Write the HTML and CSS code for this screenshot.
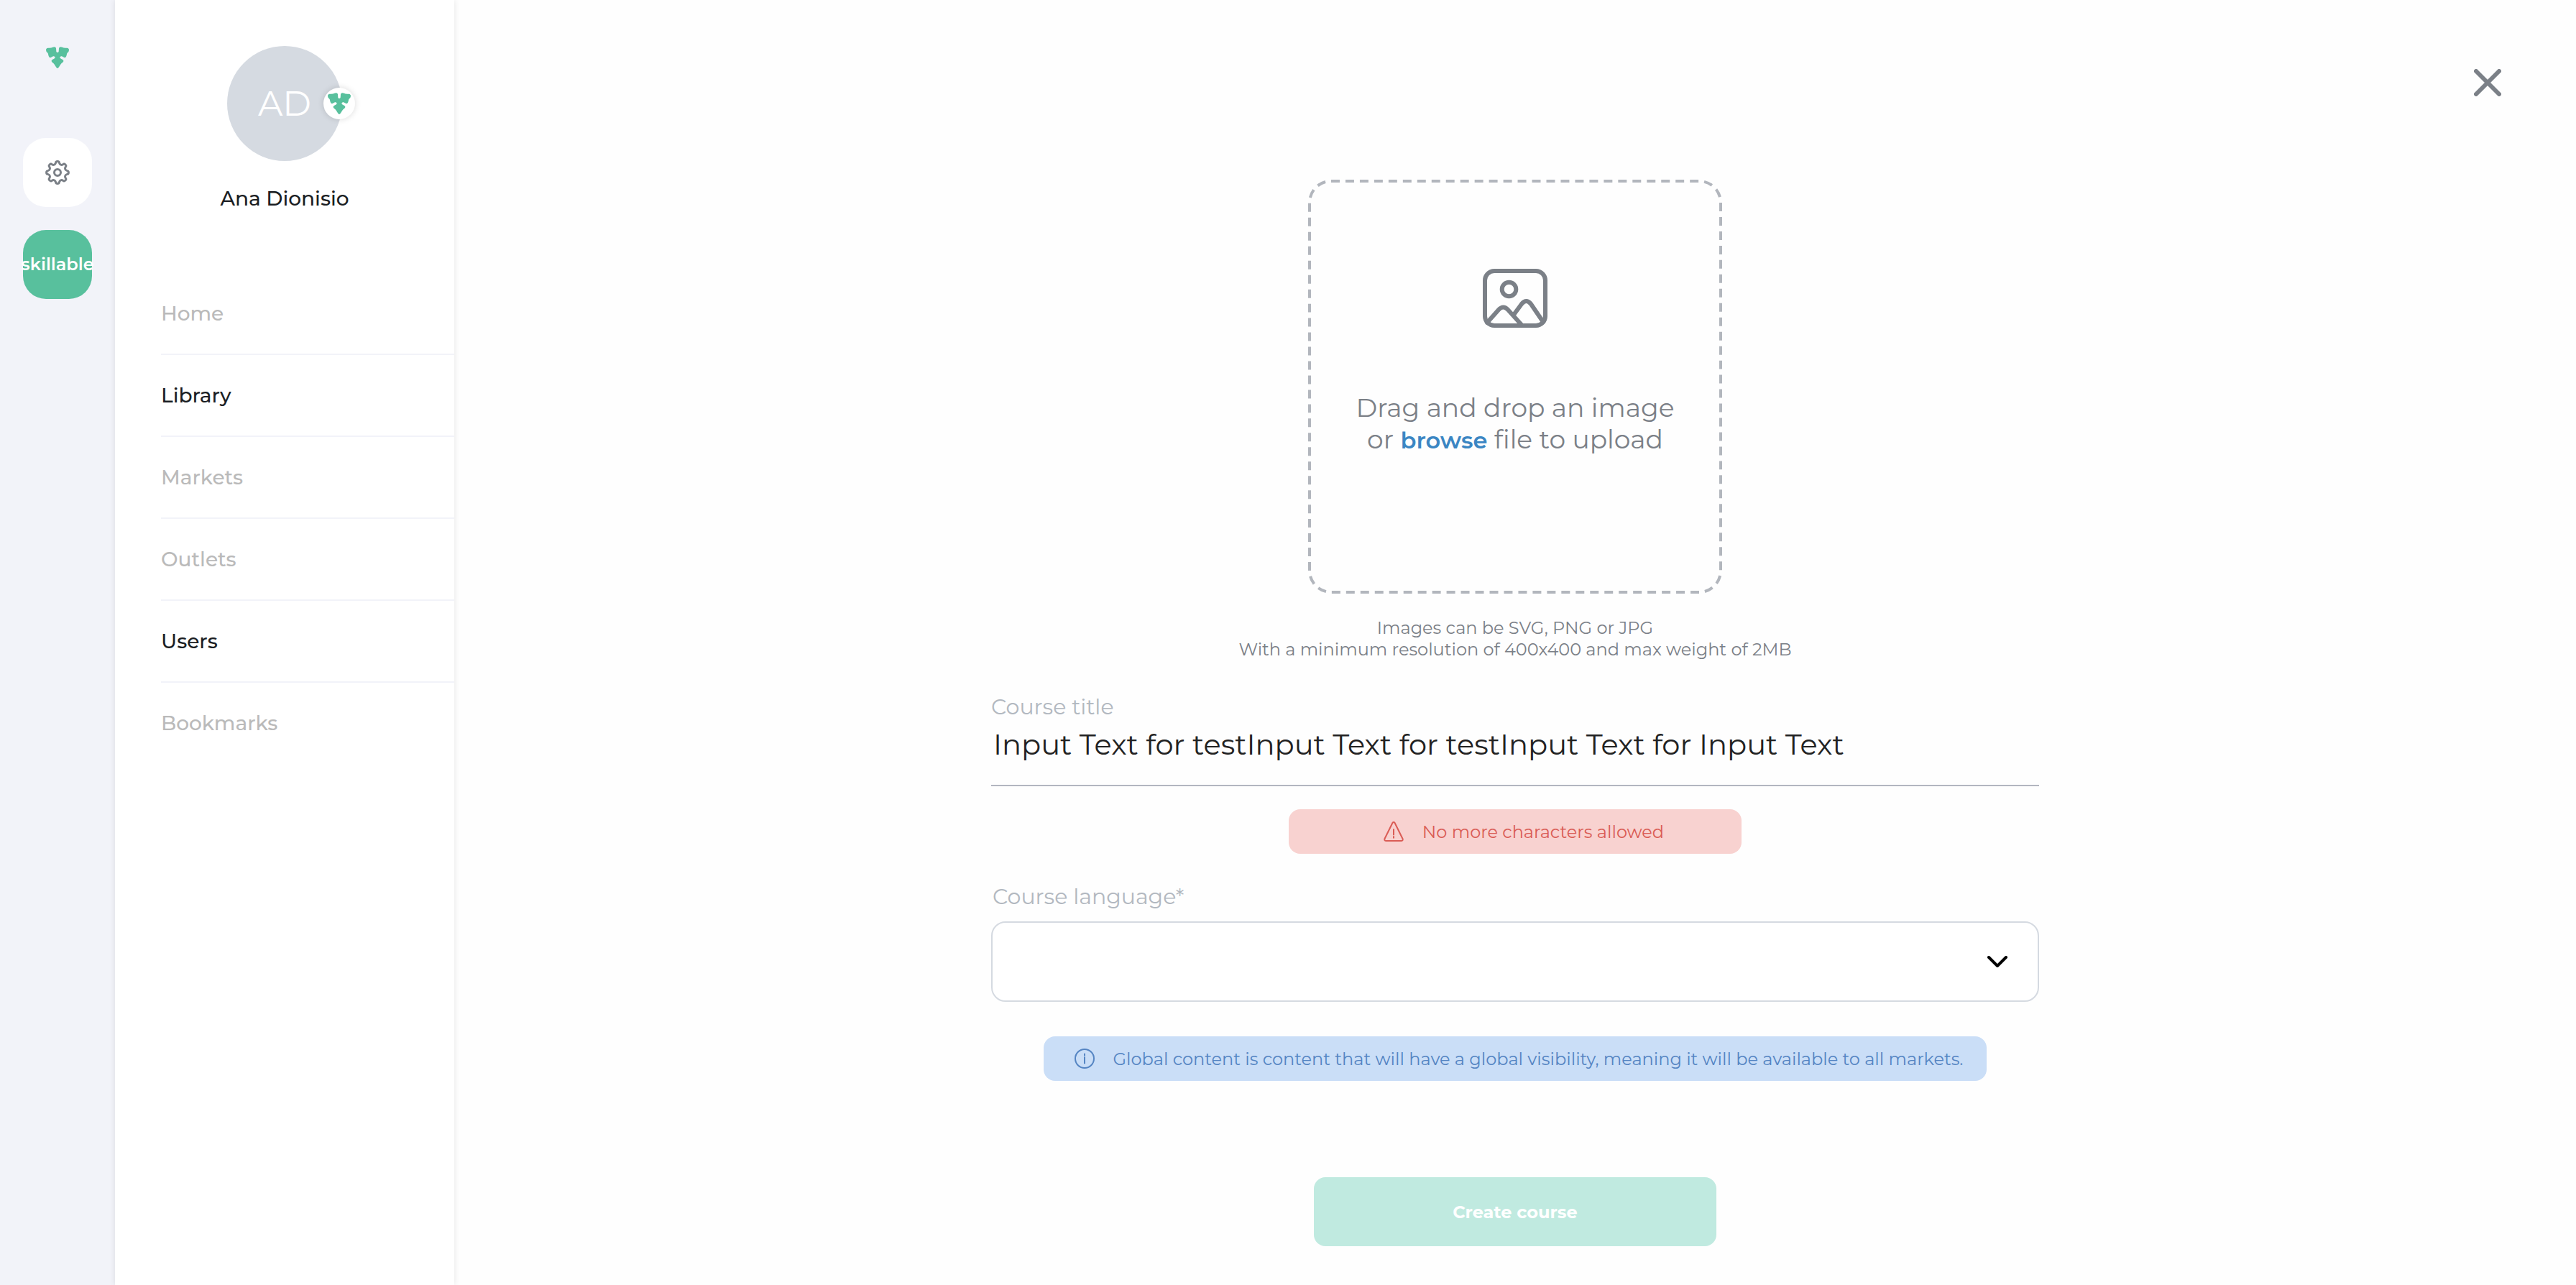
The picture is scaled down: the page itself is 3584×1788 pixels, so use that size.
FILE: index.html
```html
<!DOCTYPE html>
<html lang="en">
<head>
  <meta charset="utf-8">
  <meta name="viewport" content="width=device-width, initial-scale=1">
  <title>Create course</title>
  <link rel="stylesheet" href="styles.css">
</head>
<body class="app">
  <svg class="sprite" aria-hidden="true">
    <symbol id="logo" viewBox="0 0 96 90">
      <path d="M49 24H48Q44 24 43 20L42 7Q41-2 28 2Q22 6 8 5Q0 6 0 14Q0 22 8 27L11 39Q13 47 20 45L30 40Q36 38 38 44Q38 48 32 51Q22 55 23 61Q25 66 31 69Q34 71 40 82Q44 90 48 90H49Z"/>
      <path transform="translate(96 0) scale(-1 1)" d="M49 24H48Q44 24 43 20L42 7Q41-2 28 2Q22 6 8 5Q0 6 0 14Q0 22 8 27L11 39Q13 47 20 45L30 40Q36 38 38 44Q38 48 32 51Q22 55 23 61Q25 66 31 69Q34 71 40 82Q44 90 48 90H49Z"/>
    </symbol>
  </svg>

  <aside class="rail">
    <a class="rail-logo" href="#" aria-label="Start"><svg class="logo"><use href="#logo"/></svg></a>
    <button class="tile tile-settings" type="button" aria-label="Settings">
      <svg class="gear" viewBox="-18 -18 36 36">
        <path d="M13.04-2.59A2.6 2.6 0 0 1 13.04 2.59A3.2 3.2 0 0 0 11.06 7.39A2.6 2.6 0 0 1 7.39 11.06A3.2 3.2 0 0 0 2.59 13.04A2.6 2.6 0 0 1-2.59 13.04A3.2 3.2 0 0 0-7.39 11.06A2.6 2.6 0 0 1-11.06 7.39A3.2 3.2 0 0 0-13.04 2.59A2.6 2.6 0 0 1-13.04-2.59A3.2 3.2 0 0 0-11.06-7.39A2.6 2.6 0 0 1-7.39-11.06A3.2 3.2 0 0 0-2.59-13.04A2.6 2.6 0 0 1 2.59-13.04A3.2 3.2 0 0 0 7.39-11.06A2.6 2.6 0 0 1 11.06-7.39A3.2 3.2 0 0 0 13.04-2.59Z"/>
        <circle r="4.5"/>
      </svg>
    </button>
    <button class="tile tile-team" type="button">skillable</button>
  </aside>

  <aside class="sidebar">
    <div class="avatar">AD
      <span class="avatar-badge"><svg class="logo"><use href="#logo"/></svg></span>
    </div>
    <p class="user-name">Ana Dionisio</p>
    <nav class="nav">
      <a class="nav-link" href="#">Home</a>
      <a class="nav-link nav-link-strong" href="#">Library</a>
      <a class="nav-link" href="#">Markets</a>
      <a class="nav-link" href="#">Outlets</a>
      <a class="nav-link nav-link-strong" href="#">Users</a>
      <a class="nav-link" href="#">Bookmarks</a>
    </nav>
  </aside>

  <main class="main">
    <header class="main-header">
      <button class="close" type="button" aria-label="Close">
        <svg class="close-icon" viewBox="0 0 38 38"><path d="M3 3L35 35M35 3L3 35"/></svg>
      </button>
    </header>

    <form class="form">
      <div class="dropzone">
        <svg class="dropzone-outline" aria-hidden="true"><rect pathLength="2240"/></svg>
        <svg class="image-icon" viewBox="0 0 90 82">
          <rect x="3" y="3" width="84" height="76" rx="13"/>
          <circle cx="36.5" cy="28.5" r="9.8"/>
          <path d="M6 75L22 57Q28.5 50 35 57L54 78M43 64L54 49Q60.5 41 67 49L84 74"/>
        </svg>
        <p class="dropzone-text">Drag and drop an image<br>or <a class="browse" href="#">browse</a> file to upload</p>
      </div>
      <p class="hint">Images can be SVG, PNG or JPG<br>With a minimum resolution of 400x400 and max weight of 2MB</p>

      <label class="label" for="course-title">Course title</label>
      <input class="text-input" id="course-title" type="text" value="Input Text for testInput Text for testInput Text for Input Text">

      <div class="notice notice-error" role="alert">
        <svg class="notice-icon" viewBox="0 0 28 28">
          <path d="M12.3 2.2Q14 0 15.7 2.2L26.6 24.3Q27.2 26.8 24.8 27H3.2Q.8 26.8 1.4 24.3Z"/>
          <path d="M14 11V18.5M14 21V22.8"/>
        </svg>
        <span>No more characters allowed</span>
      </div>

      <label class="label label-language" for="course-language">Course language*</label>
      <div class="select">
        <select class="select-input" id="course-language"><option></option></select>
        <svg class="chevron" viewBox="0 0 28 16"><path d="M2 2L14 14L26 2"/></svg>
      </div>

      <div class="notice notice-info">
        <svg class="notice-icon" viewBox="0 0 28 28">
          <circle cx="14" cy="14" r="13"/>
          <path d="M14 12V20.5M14 7.5V9.5"/>
        </svg>
        <span>Global content is content that will have a global visibility, meaning it will be available to all markets.</span>
      </div>

      <button class="submit" type="submit" disabled>Create course</button>
    </form>
  </main>
</body>
</html>
```
FILE: styles.css
```css
* {
  box-sizing: border-box;
}

.app {
  display: flex;
  min-height: 100vh;
  margin: 0;
  background: #fefefe;
  color: #1b1e23;
  font-family: Montserrat, "Open Sans", sans-serif;
  font-size: 24px;
}

.sprite {
  position: absolute;
  width: 0;
  height: 0;
}

button,
input,
select {
  margin: 0;
  border: 0;
  font-family: inherit;
}

svg {
  display: block;
  flex: none;
  fill: none;
  stroke-linecap: round;
  stroke-linejoin: round;
}

.logo {
  width: 32px;
  height: 32px;
  fill: #58c09d;
}

/* Workspace rail */
.rail {
  display: flex;
  flex: none;
  flex-direction: column;
  align-items: center;
  gap: 32px;
  width: 160px;
  padding-top: 64px;
  background: #f2f3f9;
}

.rail-logo {
  height: 96px;
}

.tile {
  display: flex;
  align-items: center;
  justify-content: center;
  width: 96px;
  height: 96px;
  padding: 0;
  border-radius: 32px;
}

.tile-settings {
  background: #fff;
}

.tile-team {
  background: #58c09d;
  color: #fff;
  font-size: 24px;
  font-weight: 600;
  line-height: 28px;
}

.gear {
  width: 36px;
  height: 36px;
  stroke: #7b8087;
  stroke-width: 3;
}

/* Sidebar */
.sidebar {
  position: relative;
  z-index: 1;
  display: flex;
  flex: none;
  flex-direction: column;
  align-items: center;
  width: 472px;
  padding-top: 64px;
  background: #fff;
  box-shadow: 0 0 8px rgba(0, 0, 0, 0.1);
}

.avatar {
  position: relative;
  display: flex;
  align-items: center;
  justify-content: center;
  width: 160px;
  height: 160px;
  border-radius: 50%;
  background: #d5dae1;
  color: #fff;
  font-size: 48px;
  line-height: 56px;
}

.avatar-badge {
  position: absolute;
  top: 58px;
  right: -18px;
  display: flex;
  align-items: center;
  justify-content: center;
  width: 44px;
  height: 44px;
  border-radius: 50%;
  background: #fff;
  box-shadow: 0 0 8px rgba(0, 0, 0, 0.15);
}

.user-name {
  margin: 34px 0 86px;
  font-size: 28px;
  font-weight: 500;
  line-height: 36px;
}

.nav {
  align-self: stretch;
  padding-left: 64px;
}

.nav-link {
  display: flex;
  align-items: center;
  height: 114px;
  border-bottom: 2px solid #f2f3f9;
  color: #bababa;
  font-size: 28px;
  font-weight: 500;
  text-decoration: none;
}

.nav-link:last-child {
  border-bottom-color: transparent;
}

.nav-link-strong {
  color: #1b1e23;
}

/* Main area */
.main {
  flex: 1;
  min-width: 0;
}

.main-header {
  display: flex;
  justify-content: flex-end;
  padding: 96px 104px 0;
}

.close {
  padding: 0;
  background: none;
}

.close-icon {
  width: 38px;
  height: 38px;
  stroke: #7b8087;
  stroke-width: 6;
}

.form {
  display: flex;
  flex-direction: column;
  align-items: center;
  width: 100%;
  max-width: 1458px;
  margin: 116px auto 0;
  padding-bottom: 54px;
}

.dropzone {
  position: relative;
  display: flex;
  flex-direction: column;
  align-items: center;
  gap: 89px;
  width: 576px;
  height: 576px;
  padding-top: 124px;
}

.dropzone-outline {
  position: absolute;
  inset: 0;
  width: 100%;
  height: 100%;
}

.dropzone-outline rect {
  x: 2px;
  y: 2px;
  width: calc(100% - 4px);
  height: calc(100% - 4px);
  rx: 30px;
  stroke: #b2b6bd;
  stroke-width: 4;
  stroke-dasharray: 12 8;
  stroke-linecap: butt;
}

.image-icon {
  width: 90px;
  height: 82px;
  stroke: #7b8087;
  stroke-width: 6;
}

.dropzone-text {
  position: relative;
  margin: 0;
  color: #7b8087;
  font-size: 36px;
  line-height: 44px;
  text-align: center;
}

.browse {
  color: #3b86c3;
  font-size: 32px;
  font-weight: 600;
  text-decoration: none;
}

.hint {
  margin: 33px 0 47px;
  color: #7b8087;
  line-height: 30px;
  text-align: center;
}

.label {
  align-self: flex-start;
  color: #b2b8c0;
  font-size: 30px;
  line-height: 36px;
}

.label-language {
  margin: 42px 0 16px;
  padding-left: 2px;
}

.text-input {
  width: 100%;
  height: 92px;
  padding: 8px 3px 32px;
  border-bottom: 2px solid #b2b6c0;
  border-radius: 0;
  background: none;
  color: #222;
  font-size: 40px;
  line-height: 50px;
}

.notice {
  display: flex;
  align-items: center;
  justify-content: center;
  gap: 26px;
  max-width: 100%;
  min-height: 62px;
  border-radius: 16px;
}

.notice-icon {
  width: 28px;
  height: 28px;
  stroke: currentColor;
  stroke-width: 2;
}

.notice-error {
  width: 630px;
  margin-top: 32px;
  padding-left: 24px;
  background: #f8d2d0;
  color: #da5c55;
}

.notice-info {
  width: 1312px;
  margin-top: 48px;
  padding-left: 10px;
  background: #cadef7;
  color: #5585c3;
}

.select {
  display: grid;
  align-items: center;
  width: 100%;
}

.select-input {
  grid-area: 1 / 1;
  width: 100%;
  height: 112px;
  padding: 0 96px 0 32px;
  border: 2px solid #d5dae1;
  border-radius: 20px;
  background: #fff;
  color: #222;
  font-size: 30px;
  appearance: none;
}

.chevron {
  grid-area: 1 / 1;
  justify-self: end;
  width: 28px;
  height: 16px;
  margin-right: 44px;
  stroke: #000;
  stroke-width: 4;
  pointer-events: none;
}

.submit {
  width: 560px;
  height: 96px;
  margin-top: 134px;
  border-radius: 16px;
  background: #c0eae0;
  color: #fff;
  font-size: 24px;
  font-weight: 700;
}
```
